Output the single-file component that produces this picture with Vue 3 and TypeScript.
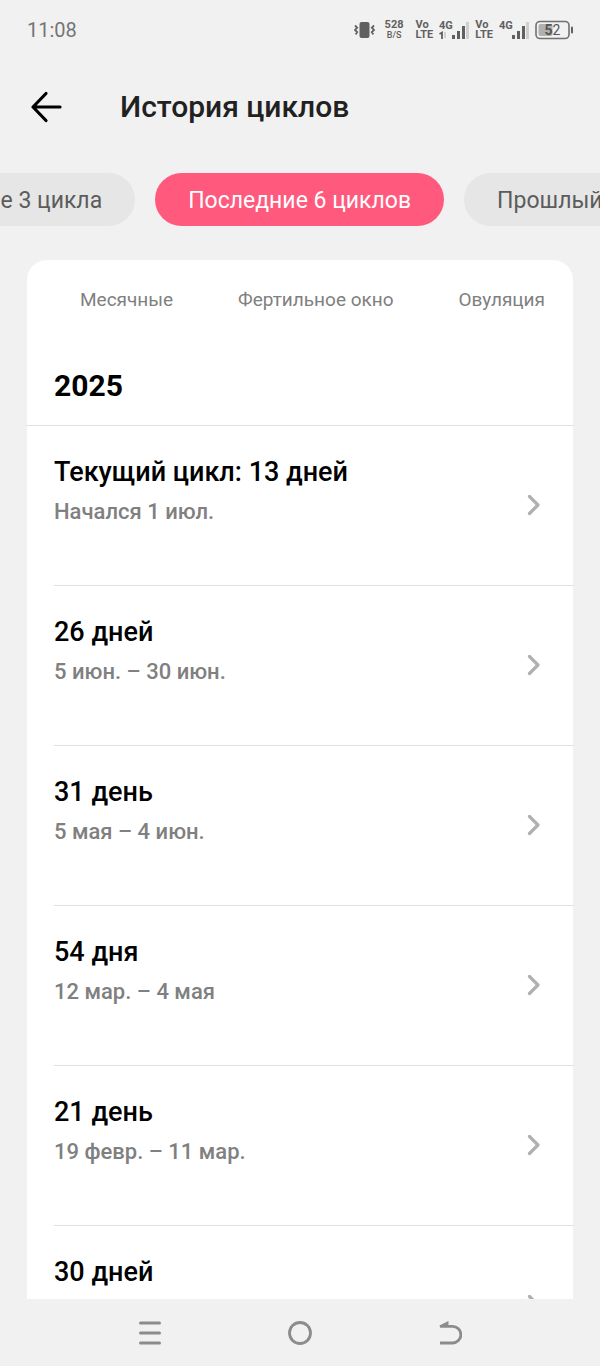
<script setup lang="ts">
import { nextTick, onMounted, ref } from 'vue'

interface Cycle {
  title: string
  period?: string
}

const filters: string[] = ['Последние 3 цикла', 'Последние 6 циклов', 'Прошлый год']
const active = ref(1)
const strip = ref<HTMLElement | null>(null)

const legend: string[] = ['Месячные', 'Фертильное окно', 'Овуляция']

const cycles: Cycle[] = [
  { title: 'Текущий цикл: 13 дней', period: 'Начался 1 июл.' },
  { title: '26 дней', period: '5 июн. – 30 июн.' },
  { title: '31 день', period: '5 мая – 4 июн.' },
  { title: '54 дня', period: '12 мар. – 4 мая' },
  { title: '21 день', period: '19 февр. – 11 мар.' },
  { title: '30 дней' },
]

// Keeps the selected filter in the middle of the strip.
function centerActive(): void {
  const el = strip.value
  const chip = el?.children[active.value] as HTMLElement | undefined
  if (!el || !chip) return
  const a = el.getBoundingClientRect()
  const b = chip.getBoundingClientRect()
  el.scrollLeft += b.left + b.width / 2 - (a.left + a.width / 2)
}

function select(index: number): void {
  active.value = index
  nextTick(centerActive)
}

onMounted(centerActive)
</script>

<template>
  <div class="screen">
    <div class="status">
      <span class="clock">11:08</span>
      <div class="indicators">
        <svg class="vibrate" width="21" height="18" viewBox="0 0 21 18" aria-hidden="true">
          <rect x="5.5" y="1" width="10" height="16" rx="2" fill="#606060" />
          <path d="M1 4.5l2.2 2.2L1 9l2.2 2.2L1.6 13.4M20 4.5l-2.2 2.2L20 9l-2.2 2.2 1.6 2.2" fill="none" stroke="#606060" stroke-width="1.8" />
        </svg>
        <span class="stack speed"><b>528</b><small>B/S</small></span>
        <span class="stack volte"><b>Vo</b><b>LTE</b></span>
        <svg class="signal" width="30" height="20" viewBox="0 0 30 20">
          <text x="0" y="9">4G</text>
          <path d="M0.500 14l2.500-1.500V19" fill="none" stroke="#606060" stroke-width="1.8" />
          <path d="M6 12v6" stroke="#c4c4c4" stroke-width="1.5" />
          <path d="M14.5 15v4M19.5 11v8M24.5 6v13" stroke="#606060" stroke-width="3" />
          <path d="M28.5 2v17" stroke="#cfcfcf" stroke-width="3" />
        </svg>
        <span class="stack volte"><b>Vo</b><b>LTE</b></span>
        <svg class="signal" width="30" height="20" viewBox="0 0 30 20">
          <text x="0" y="9">4G</text>
          <path d="M14.5 15v4M19.5 11v8M24.5 6v13" stroke="#606060" stroke-width="3" />
          <path d="M28.5 2v17" stroke="#cfcfcf" stroke-width="3" />
        </svg>
        <svg class="battery" width="38" height="20" viewBox="0 0 38 20">
          <rect x="1" y="1.5" width="33" height="17" rx="4" fill="none" stroke="#707070" stroke-width="1.6" />
          <rect x="3.5" y="4" width="14" height="12" rx="2" fill="#b0b0b0" />
          <path d="M37 7.5v5" stroke="#606060" stroke-width="2" stroke-linecap="round" />
          <text x="17.500" y="14.500" text-anchor="middle"><tspan font-weight="700">5</tspan>2</text>
        </svg>
      </div>
    </div>

    <header class="header">
      <button class="back" type="button" aria-label="Назад">
        <svg width="32" height="32" viewBox="0 0 32 32" aria-hidden="true">
          <path d="M30 16H3M16 2.500L3 16l13 13.500" fill="none" stroke="#000" stroke-width="3.200" stroke-linecap="round" stroke-linejoin="round" />
        </svg>
      </button>
      <h1>История циклов</h1>
    </header>

    <div ref="strip" class="filters">
      <button
        v-for="(label, i) in filters"
        :key="label"
        type="button"
        class="chip"
        :class="{ active: i === active }"
        :aria-pressed="i === active"
        @click="select(i)"
      >{{ label }}</button>
    </div>

    <main class="card">
      <div class="legend">
        <span v-for="item in legend" :key="item">{{ item }}</span>
      </div>
      <h2>2025</h2>
      <ul class="list">
        <li v-for="cycle in cycles" :key="cycle.title">
          <button class="row" type="button">
            <span class="info">
              <span class="title">{{ cycle.title }}</span>
              <span class="period">{{ cycle.period }}</span>
            </span>
            <svg width="14" height="22" viewBox="0 0 14 22" aria-hidden="true">
              <path d="M2.500 2.500L11 11l-8.500 8.500" fill="none" stroke="#b0b0b0" stroke-width="3.200" stroke-linecap="round" stroke-linejoin="round" />
            </svg>
          </button>
        </li>
      </ul>
    </main>

    <nav class="navbar">
      <button type="button" aria-label="Недавние">
        <svg width="24" height="26" viewBox="0 0 24 26" aria-hidden="true">
          <path d="M2.500 3h19M2.500 13h19M2.500 23h19" stroke="#8c8c8c" stroke-width="3" stroke-linecap="round" />
        </svg>
      </button>
      <button type="button" aria-label="Домой">
        <svg width="24" height="26" viewBox="0 0 24 26" aria-hidden="true">
          <circle cx="12" cy="13" r="10.500" fill="none" stroke="#8c8c8c" stroke-width="2.800" />
        </svg>
      </button>
      <button type="button" aria-label="Назад">
        <svg width="24" height="26" viewBox="0 0 24 26" aria-hidden="true">
          <path d="M2 6.300h12.500a8.300 8.300 0 0 1 0 16.700H2" fill="none" stroke="#8c8c8c" stroke-width="2.800" />
          <path d="M1.500 5.500L10.500 1v3.500L9 6.300H1.500z" fill="#8c8c8c" />
        </svg>
      </button>
    </nav>
  </div>
</template>

<style>
body {
  margin: 0;
  background: #f1f1f1;
}
</style>

<style scoped>
.screen {
  display: flex;
  flex-direction: column;
  height: 100vh;
  overflow: hidden;
  background: #f1f1f1;
  color: #000;
  font-family: Roboto, "Noto Sans", sans-serif;
}

button {
  margin: 0;
  padding: 0;
  border: 0;
  background: none;
  color: inherit;
  font: inherit;
  cursor: pointer;
}

svg {
  display: block;
  flex: none;
}

.status {
  display: flex;
  flex: none;
  align-items: center;
  justify-content: space-between;
  height: 60px;
  padding: 0 27px;
}

.clock {
  color: #757575;
  font-size: 20px;
  line-height: 24px;
}

.indicators {
  display: flex;
  align-items: center;
  color: #606060;
}

.stack {
  display: flex;
  flex-direction: column;
  align-items: center;
  font-size: 11px;
  line-height: 10px;
}

.stack small {
  font-size: 9px;
  font-weight: 500;
}

.stack b {
  font-weight: 700;
}

.speed {
  margin: 0 12px 0 10px;
}

.volte {
  align-items: flex-start;
}

.signal {
  margin: 0 6px;
}

.signal text {
  fill: #606060;
  font-size: 11px;
  font-weight: 700;
}

.battery text {
  fill: #555;
  font-size: 14px;
}

.header {
  display: flex;
  flex: none;
  align-items: center;
  gap: 58px;
  height: 94px;
  padding: 0 30px;
}

h1 {
  margin: 0;
  color: #212121;
  font-size: 30px;
  font-weight: 500;
  line-height: 40px;
}

.filters {
  display: flex;
  flex: none;
  gap: 20px;
  margin: 19px 0 34px;
  padding: 0 27px;
  overflow-x: auto;
  scrollbar-width: none;
}

.chip {
  flex: none;
  height: 53px;
  padding: 1px 33px 0;
  border-radius: 27px;
  background: #e6e6e6;
  color: #5c5c5c;
  font-size: 23px;
  white-space: nowrap;
}

.chip.active {
  background: #ff5a7e;
  color: #fff;
}

.card {
  flex: 1;
  min-height: 0;
  margin: 0 27px;
  overflow-y: auto;
  border-radius: 20px 20px 0 0;
  background: #fff;
  scrollbar-width: none;
}

.legend {
  display: flex;
  justify-content: space-between;
  padding: 28px 28px 0 53px;
  color: #808080;
  font-size: 19px;
  line-height: 24px;
}

h2 {
  margin: 0;
  padding: 54px 27px 19px;
  border-bottom: 1px solid #e0e0e0;
  font-size: 30px;
  font-weight: 700;
  line-height: 40px;
}

.list {
  margin: 0;
  padding: 0;
  list-style: none;
}

.list li {
  margin-left: 27px;
  border-bottom: 1px solid #e0e0e0;
}

.row {
  display: flex;
  align-items: center;
  justify-content: space-between;
  width: 100%;
  height: 159px;
  padding: 0 32px 2px 0;
  text-align: left;
}

.info {
  display: flex;
  flex-direction: column;
  gap: 6px;
  padding-bottom: 28px;
}

.title {
  font-size: 27px;
  font-weight: 500;
  line-height: 36px;
}

.period {
  min-height: 32px;
  color: #808080;
  font-size: 22px;
  font-weight: 500;
  line-height: 32px;
}

.navbar {
  display: flex;
  flex: none;
  justify-content: space-between;
  height: 67px;
  padding: 0 75px;
}

.navbar button {
  display: flex;
  flex: 1;
  align-items: center;
  justify-content: center;
}
</style>
